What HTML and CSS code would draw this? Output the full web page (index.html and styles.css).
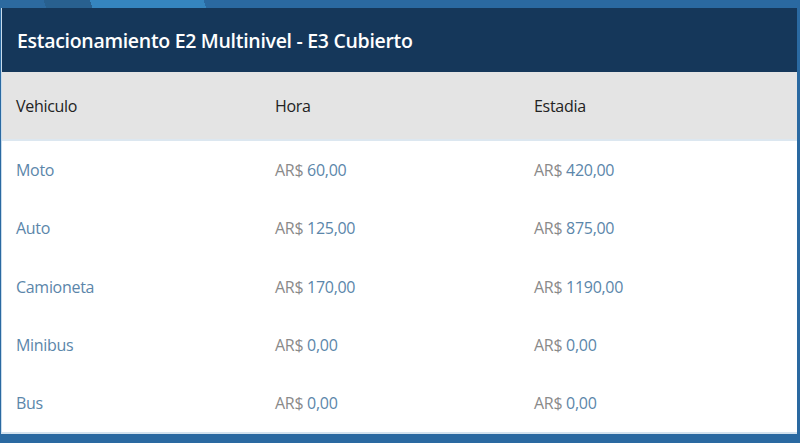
FILE: index.html
```html
<!DOCTYPE html>
<html lang="es">
<head>
<meta charset="utf-8">
<link rel="stylesheet" href="styles.css">
</head>
<body>
<div class="card">
  <div class="title">Estacionamiento E2 Multinivel - E3 Cubierto</div>
  <div class="row head">
    <div>Vehiculo</div><div>Hora</div><div>Estadia</div>
  </div>
  <div class="row">
    <div class="name">Moto</div>
    <div class="price"><span class="cur">AR$</span> 60,00</div>
    <div class="price"><span class="cur">AR$</span> 420,00</div>
  </div>
  <div class="row">
    <div class="name">Auto</div>
    <div class="price"><span class="cur">AR$</span> 125,00</div>
    <div class="price"><span class="cur">AR$</span> 875,00</div>
  </div>
  <div class="row">
    <div class="name">Camioneta</div>
    <div class="price"><span class="cur">AR$</span> 170,00</div>
    <div class="price"><span class="cur">AR$</span> 1190,00</div>
  </div>
  <div class="row">
    <div class="name">Minibus</div>
    <div class="price"><span class="cur">AR$</span> 0,00</div>
    <div class="price"><span class="cur">AR$</span> 0,00</div>
  </div>
  <div class="row">
    <div class="name">Bus</div>
    <div class="price"><span class="cur">AR$</span> 0,00</div>
    <div class="price"><span class="cur">AR$</span> 0,00</div>
  </div>
</div>
</body>
</html>
```
FILE: styles.css
```css
html, body {
  margin: 0;
  height: 443px;
  overflow: hidden;
}
body {
  background-color: #2a69a1;
  background-image: linear-gradient(72deg, #2c6aa0 0, #2c6aa0 44px, #28608f 44px, #28608f 88px, #3585bf 88px, #3585bf 196px, #2a69a1 196px);
  background-size: 100% 8px;
  background-repeat: no-repeat;
  padding: 8px 3px 0 1px;
  font-family: "Open Sans", "Noto Sans", sans-serif;
}
.card {
  background: #fff;
  height: 426px;
  border-left: 1px solid #c9dcec;
  border-bottom: 2px solid #d3e2ee;
  box-sizing: border-box;
  display: flex;
  flex-direction: column;
}
.title {
  background: #15375a;
  color: #fff;
  height: 64px;
  display: flex;
  align-items: center;
  padding-left: 15px;
  font-size: 19.5px;
  font-weight: 600;
  letter-spacing: -0.3px;
}
.row {
  display: grid;
  grid-template-columns: 259px 259px 1fr;
  align-items: center;
  padding-left: 14px;
  flex: 1;
  font-size: 16px;
  letter-spacing: -0.3px;
}
.row.head {
  flex: none;
  height: 67px;
  background: #e4e4e4;
  color: #222;
  border-bottom: 2px solid #dce7f0;
}
.name, .price {
  color: #5b86aa;
}
.cur {
  color: #8a8a8a;
}
```
